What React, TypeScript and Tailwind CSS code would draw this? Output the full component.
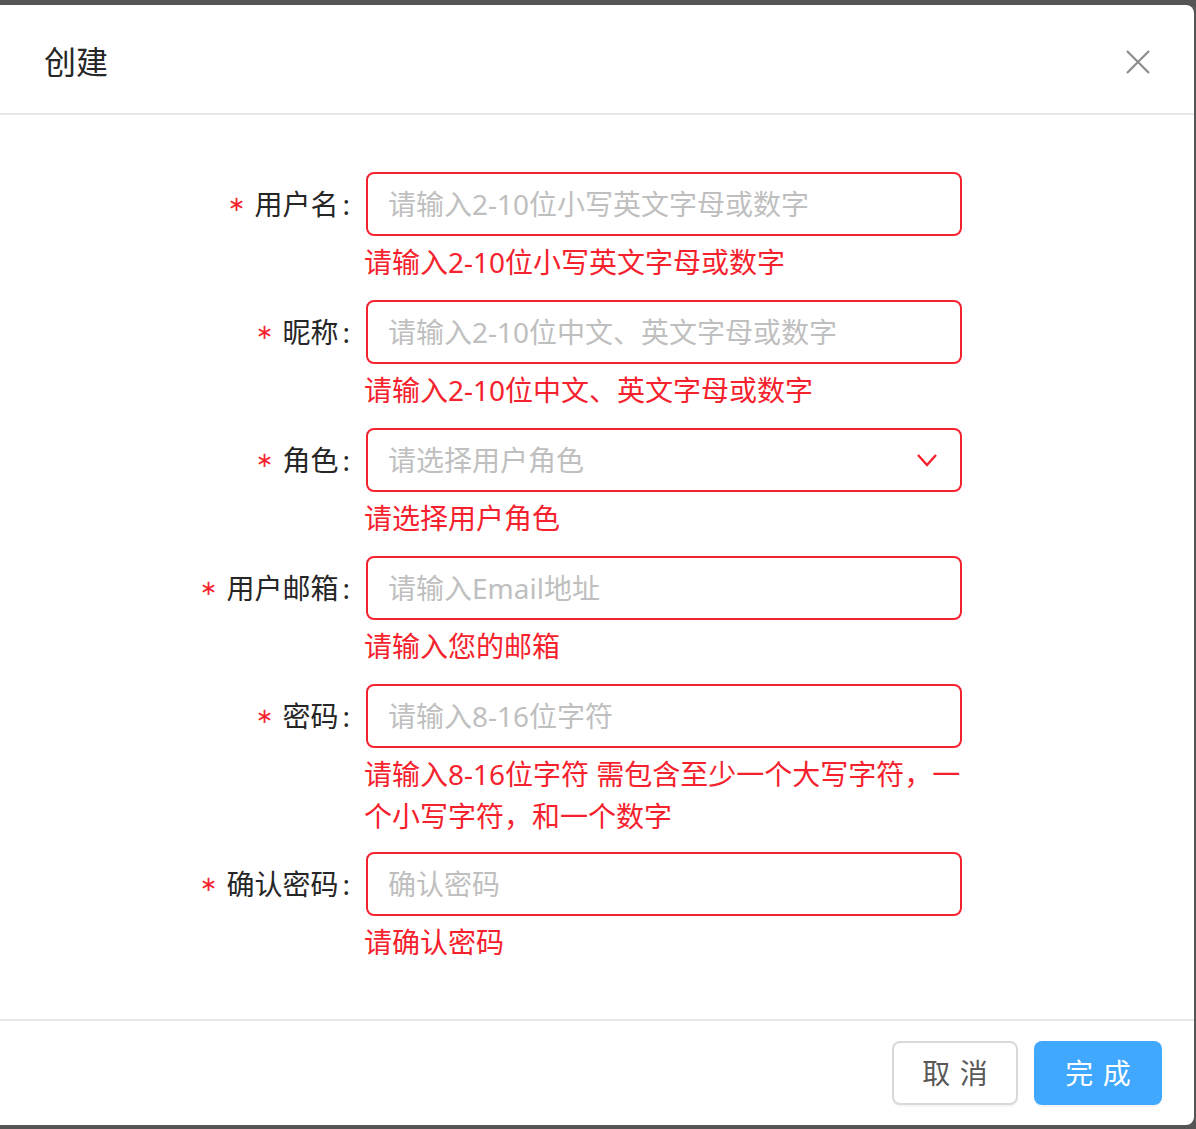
import { FC, ReactNode } from "react";

interface FieldProps {
  label: string;
  placeholder: string;
  error: ReactNode;
  select?: boolean;
  rowClass?: string;
}

const Field: FC<FieldProps> = ({ label, placeholder, error, select, rowClass }) => {
  return (
    <div className={`flex ${rowClass ?? "mb-[17px]"}`}>
      <div className="w-[366px] shrink-0 flex justify-end items-start h-[64px]">
        <label className="flex items-center h-[64px] text-[28px] text-[#262626] leading-none">
          <span className="text-[#f5222d] mr-[9px] text-[21px] font-['DejaVu_Sans']">∗</span>
          <span>{label}</span>
          <span className="ml-[4px] mr-[16px]">:</span>
        </label>
      </div>
      <div className="w-[596px]">
        <div className="h-[64px] border-2 border-[#f5222d] rounded-[8px] pl-[20px] pr-[22px] flex items-center justify-between bg-white">
          <span className="text-[28px] text-[#bfbfbf] leading-none">{placeholder}</span>
          {select && (
            <svg width="24" height="24" viewBox="0 0 24 24" className="-mr-[1px]">
              <polyline
                points="3,7 12,17 21,7"
                fill="none"
                stroke="#f5222d"
                strokeWidth="2.4"
              />
            </svg>
          )}
        </div>
        <div className="mt-[5px] -ml-[2px] text-[28px] leading-[42px] text-[#f5222d]">{error}</div>
      </div>
    </div>
  );
};

const App: FC = () => {
  return (
    <div className="w-[1196px] h-[1129px] bg-[#555555] pt-[5px] pr-[2px] pb-[4px] font-['Noto_Sans','Noto_Sans_CJK_SC',sans-serif]">
      <div className="w-[1194px] h-[1120px] bg-white rounded-r-[8px] flex flex-col">
        <div className="h-[110px] pt-[5px] border-b-2 border-[#e8e8e8] flex items-center justify-between pl-[44px] pr-[44px]">
          <span className="text-[32px] text-[#262626] leading-none">创建</span>
          <svg width="24" height="24" viewBox="0 0 24 24">
            <path d="M1 1 L23 23 M23 1 L1 23" stroke="#8c8c8c" strokeWidth="2.2" fill="none" />
          </svg>
        </div>
        <div className="flex-1 pt-[57px]">
          <Field
            label="用户名"
            placeholder="请输入2-10位小写英文字母或数字"
            error="请输入2-10位小写英文字母或数字"
          />
          <Field
            label="昵称"
            placeholder="请输入2-10位中文、英文字母或数字"
            error="请输入2-10位中文、英文字母或数字"
          />
          <Field label="角色" placeholder="请选择用户角色" error="请选择用户角色" select />
          <Field label="用户邮箱" placeholder="请输入Email地址" error="请输入您的邮箱" />
          <Field
            label="密码"
            placeholder="请输入8-16位字符"
            rowClass="mb-[15px]"
            error={
              <>
                <span className="block whitespace-nowrap">请输入8-16位字符 需包含至少一个大写字符，一</span>
                <span className="block whitespace-nowrap">个小写字符，和一个数字</span>
              </>
            }
          />
          <Field label="确认密码" placeholder="确认密码" error="请确认密码" rowClass="mb-0" />
        </div>
        <div className="border-t-2 border-[#e8e8e8] pt-[20px] pb-[20px] pr-[32px] flex justify-end gap-[16px]">
          <button className="h-[64px] w-[126px] border-2 border-[#d9d9d9] rounded-[8px] bg-white text-[#595959] text-[28px] shadow-[0_2px_0_rgba(0,0,0,0.03)]">
            <span className="tracking-[0.34em] -mr-[0.34em]">取消</span>
          </button>
          <button className="h-[64px] w-[128px] rounded-[8px] bg-[#40a9ff] text-white text-[28px] shadow-[0_2px_0_rgba(0,0,0,0.045)]">
            <span className="tracking-[0.34em] -mr-[0.34em]">完成</span>
          </button>
        </div>
      </div>
    </div>
  );
};

export default App;
